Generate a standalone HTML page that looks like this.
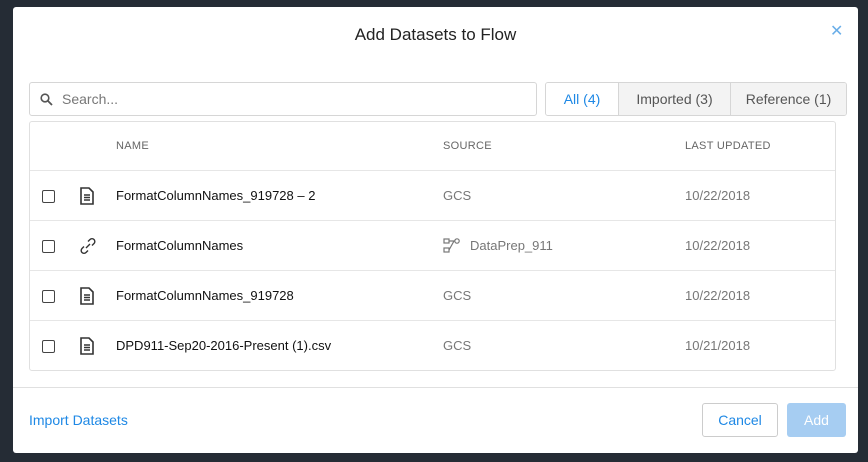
<!DOCTYPE html>
<html><head><style>
*{box-sizing:border-box;margin:0;padding:0}
body{width:868px;height:462px;background:#252c35;font-family:"Liberation Sans",sans-serif;position:relative;overflow:hidden}
.m{position:absolute;left:13px;top:7px;width:845px;height:446px;background:#fff;border-radius:3px}
.a{position:absolute}
.title{left:0;right:0;top:18px;text-align:center;font-size:17px;color:#222}
.x{left:817px;top:14px;color:#6aaee8;font-size:16px}
.search{left:16px;top:75px;width:508px;height:34px;border:1px solid #d6d6d6;border-radius:3px;font-size:14px;color:#777;padding:8px 0 0 32px}
.tabs{left:532px;top:75px;width:302px;height:34px;border:1px solid #d6d6d6;border-radius:3px;display:flex;font-size:14px;overflow:hidden}
.tabs div{display:flex;align-items:center;justify-content:center;background:#f3f3f3;color:#555;border-left:1px solid #d6d6d6}
.tabs div:first-child{background:#fff;color:#1e88e5;border-left:none}
.tbl{left:16px;top:114px;width:807px;height:250px;border:1px solid #e0e0e0;border-radius:3px}
.hd{position:absolute;top:18px;font-size:11px;color:#666;letter-spacing:.3px}
.row{position:absolute;left:0;right:0;height:50px;border-top:1px solid #e6e6e6;font-size:13px}
.cb{position:absolute;left:12px;top:19px;width:13px;height:13px;border:1.6px solid #444;border-radius:2px}
.nm{position:absolute;left:86px;top:17px;color:#111}
.src{position:absolute;left:413px;top:17px;color:#777}
.dt{position:absolute;left:655px;top:17px;color:#777}
.ic{position:absolute;left:49px;top:16px}
.foot{left:0;right:0;top:380px;border-top:1px solid #e0e0e0}
.imp{left:16px;top:405px;color:#1e88e5;font-size:14px}
.btn{top:396px;height:34px;border-radius:3px;font-size:14px;display:flex;align-items:center;justify-content:center}
</style></head><body>
<div class="m">
<div class="a title">Add Datasets to Flow</div>
<div class="a x">✕</div>
<div class="a search">Search...
<svg class="a" style="left:10px;top:10px" width="13" height="13" viewBox="0 0 13 13"><circle cx="5" cy="5" r="3.8" fill="none" stroke="#555" stroke-width="1.6"/><path d="M8 8l4 4" stroke="#555" stroke-width="1.8"/></svg></div>
<div class="a tabs"><div style="width:72px">All (4)</div><div style="width:112px">Imported (3)</div><div style="flex:1">Reference (1)</div></div>
<div class="a tbl">
<div class="hd" style="left:86px">NAME</div><div class="hd" style="left:413px">SOURCE</div><div class="hd" style="left:655px">LAST UPDATED</div>
<div class="row" style="top:48px"><div class="cb"></div><svg class="ic" width="16" height="18" viewBox="0 0 16 18"><path d="M2 1h8l4 4v12H2z" fill="none" stroke="#333" stroke-width="1.6"/><path d="M5 8h6M5 10.5h6M5 13h6" stroke="#333" stroke-width="1.5"/></svg><div class="nm">FormatColumnNames_919728 – 2</div><div class="src">GCS</div><div class="dt">10/22/2018</div></div>
<div class="row" style="top:98px"><div class="cb"></div><svg class="ic" width="18" height="18" viewBox="0 0 18 18"><path d="M7 11l4-4M9 4.5l2-2a2.8 2.8 0 014 4l-2 2M9 13.5l-2 2a2.8 2.8 0 01-4-4l2-2" fill="none" stroke="#333" stroke-width="1.4"/></svg><div class="nm">FormatColumnNames</div>
<svg class="a" style="left:413px;top:17px" width="18" height="16" viewBox="0 0 18 16"><rect x="1" y="1" width="5" height="4" fill="none" stroke="#777" stroke-width="1.2"/><rect x="1" y="10" width="5" height="4" fill="none" stroke="#777" stroke-width="1.2"/><path d="M6 3h5l-5 9" fill="none" stroke="#777" stroke-width="1.2"/><circle cx="14" cy="3" r="2.2" fill="none" stroke="#777" stroke-width="1.2"/></svg>
<div class="src" style="left:440px">DataPrep_911</div><div class="dt">10/22/2018</div></div>
<div class="row" style="top:148px"><div class="cb"></div><svg class="ic" width="16" height="18" viewBox="0 0 16 18"><path d="M2 1h8l4 4v12H2z" fill="none" stroke="#333" stroke-width="1.6"/><path d="M5 8h6M5 10.5h6M5 13h6" stroke="#333" stroke-width="1.5"/></svg><div class="nm">FormatColumnNames_919728</div><div class="src">GCS</div><div class="dt">10/22/2018</div></div>
<div class="row" style="top:198px"><div class="cb"></div><svg class="ic" width="16" height="18" viewBox="0 0 16 18"><path d="M2 1h8l4 4v12H2z" fill="none" stroke="#333" stroke-width="1.6"/><path d="M5 8h6M5 10.5h6M5 13h6" stroke="#333" stroke-width="1.5"/></svg><div class="nm">DPD911-Sep20-2016-Present (1).csv</div><div class="src">GCS</div><div class="dt">10/21/2018</div></div>
</div>
<div class="a foot"></div>
<div class="a imp">Import Datasets</div>
<div class="a btn" style="left:689px;width:76px;border:1px solid #ccc;color:#1e88e5">Cancel</div>
<div class="a btn" style="left:774px;width:59px;background:#a6cdf2;color:#fff">Add</div>
</div>
</body></html>
